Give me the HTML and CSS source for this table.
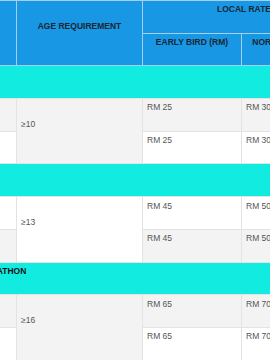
FILE: index.html
```html
<!DOCTYPE html>
<html lang="en">
<head>
<meta charset="utf-8">
<title>Race Rates</title>
<link rel="stylesheet" href="styles.css">
</head>
<body>
<div class="wrap">
  <table class="rates">
    <colgroup>
      <col class="c-cat">
      <col class="c-age">
      <col class="c-early">
      <col class="c-normal">
      <col class="c-late">
    </colgroup>
    <thead>
      <tr>
        <th rowspan="2">RACE</th>
        <th rowspan="2">AGE REQUIREMENT</th>
        <th colspan="3">LOCAL RATE</th>
      </tr>
      <tr>
        <th>EARLY BIRD (RM)</th>
        <th>NORMAL (RM)</th>
        <th>LATE (RM)</th>
      </tr>
    </thead>
    <tbody>
      <tr class="section"><td colspan="5">5KM RUN</td></tr>
      <tr><td>Male</td><td rowspan="2">≥10</td><td>RM 25</td><td>RM 30</td><td>RM 35</td></tr>
      <tr><td>Female</td><td>RM 25</td><td>RM 30</td><td>RM 35</td></tr>
      <tr class="section"><td colspan="5">10KM RUN</td></tr>
      <tr><td>Male</td><td rowspan="2">≥13</td><td>RM 45</td><td>RM 50</td><td>RM 55</td></tr>
      <tr><td>Female</td><td>RM 45</td><td>RM 50</td><td>RM 55</td></tr>
      <tr class="section"><td colspan="5">HALF MARATHON</td></tr>
      <tr><td>Male</td><td rowspan="2">≥16</td><td>RM 65</td><td>RM 70</td><td>RM 75</td></tr>
      <tr><td>Female</td><td>RM 65</td><td>RM 70</td><td>RM 75</td></tr>
    </tbody>
  </table>
</div>
</body>
</html>
```
FILE: styles.css
```css
body {
  margin: 0;
  font-family: "Liberation Sans", Arial, sans-serif;
  background: #fff;
}

.wrap {
  width: 270px;
  height: 360px;
  overflow: hidden;
}

.rates {
  border-collapse: collapse;
  table-layout: fixed;
  width: 397.6px;
  margin-left: -52.6px;
  font-size: 8.5px;
  line-height: 9.8px;
}

.c-cat { width: 68.6px; }
.c-age { width: 126px; }
.c-early { width: 99px; }
.c-normal { width: 80px; }
.c-late { width: 24px; }

.rates th,
.rates td {
  padding: 4.4px 4px 17.5px;
  border: 1px solid #e3e3e3;
  white-space: nowrap;
  overflow: hidden;
  vertical-align: middle;
  text-align: left;
}

.rates th {
  background: #1797e4;
  color: #1b2632;
  font-weight: bold;
  text-align: center;
  border-color: #a6cfee;
}

.rates td {
  color: #555;
  background: #fff;
}

.rates tbody tr:nth-child(even) td {
  background: #f3f3f3;
}

.rates tbody tr.section td {
  background: #12ece0;
  color: #111;
  font-weight: bold;
}
```
